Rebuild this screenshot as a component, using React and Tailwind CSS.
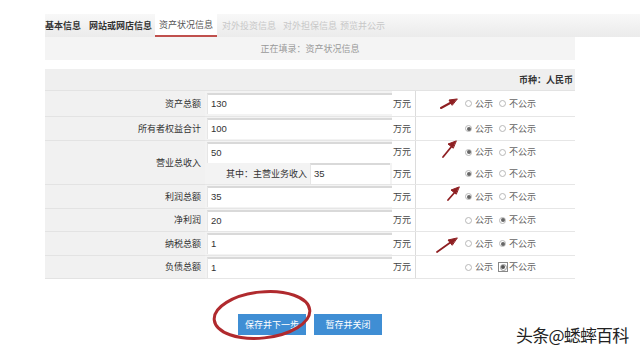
import React from "react";

const CJK = "font-['Noto_Sans_CJK_SC','Noto_Sans',sans-serif]";

function Radio({ on, focus }) {
  const dot = (
    <span className="inline-flex items-center justify-center w-[7px] h-[7px] rounded-full border border-[#b8b8b8] bg-white">
      {on && <span className="w-[4px] h-[4px] rounded-full bg-[#666]" />}
    </span>
  );
  if (focus) {
    return (
      <span className="inline-flex items-center justify-center w-[10px] h-[10px] border border-[#888] mr-[1px]">
        <span className="inline-flex items-center justify-center w-[7px] h-[7px] rounded-full border border-[#999] bg-white">
          <span className="w-[4px] h-[4px] rounded-full bg-[#555]" />
        </span>
      </span>
    );
  }
  return <span className="inline-flex mr-[3px]">{dot}</span>;
}

function Radios({ sel }) {
  return (
    <div className="flex items-center pl-[49px] text-[9px] text-[#666]">
      <span className="flex items-center">
        <Radio on={sel === 1} />
        公示
      </span>
      <span className={"flex items-center " + (sel === 3 ? "ml-[5px]" : "ml-[6px]")}>
        <Radio on={sel === 2} focus={sel === 3} />
        不公示
      </span>
    </div>
  );
}

function Input({ value, w }) {
  return (
    <div
      className={
        "h-[21px] bg-white border-t-2 border-t-[#d9d9d9] border-l border-l-[#e6e6e6] flex items-center pl-[3px] text-[9.5px] text-[#333] font-['Liberation_Sans',sans-serif] " +
        (w || "w-[185px]")
      }
    >
      {value}
    </div>
  );
}

function Sub({ h, children, sel, border = true }) {
  return (
    <div className={"flex " + h + (border ? " border-b border-[#e6e6e6]" : "")}>
      <div className="w-[187px] bg-[#f3f3f3] flex items-center pl-[2px]">{children}</div>
      <div className="w-[23px] flex items-center text-[9px] text-[#444] pl-[1px] bg-white">万元</div>
      <div className="w-[160px] border-l border-[#dcdcdc] flex items-center bg-white">
        <Radios sel={sel} />
      </div>
    </div>
  );
}

function Row({ label, value, h, sel }) {
  return (
    <div className="flex">
      <div className={"w-[160px] bg-[#f1f1f1] border-b border-[#e3e3e3] flex items-center justify-end pr-[4px] text-[9px] text-[#333] " + h}>
        {label}
      </div>
      <div className="flex-1">
        <Sub h={h} sel={sel}>
          <Input value={value} />
        </Sub>
      </div>
    </div>
  );
}

export default function App() {
  return (
    <div className={"relative w-[640px] h-[353px] bg-white overflow-hidden " + CJK}>
      {/* tabs */}
      <div className="ml-[45px] mt-[14px] w-[595px] h-[23px] flex items-stretch bg-gradient-to-b from-[#f8f8f8] to-[#ebebeb] text-[9px]">
        <div className="w-[44px] flex items-center text-[#333] font-bold">基本信息</div>
        <div className="w-[66px] flex items-center text-[#333] font-bold">网站或网店信息</div>
        <div className="w-[62px] flex items-center justify-center bg-white text-[#555] border-b-2 border-[#c0504d]">资产状况信息</div>
        <div className="w-[63px] flex items-center pl-[5px] text-[#c8c8c8]">对外投资信息</div>
        <div className="w-[60px] flex items-center pl-[3px] text-[#c8c8c8]">对外担保信息</div>
        <div className="flex items-center pl-[0px] text-[#c8c8c8]">预览并公示</div>
      </div>
      <div className="ml-[45px] w-[530px] h-[23px] bg-[#f4f4f4] flex items-center justify-center text-[9px] text-[#999]">
        正在填录：资产状况信息
      </div>

      {/* table */}
      <div className="ml-[45px] mt-[9px] w-[530px]">
        <div className="h-[22px] bg-[#efefef] border-b border-[#e3e3e3] flex items-center justify-end pr-[2px] text-[9px] font-bold text-[#333]">
          币种：人民币
        </div>
        <Row label="资产总额" value="130" h="h-[26px]" sel={0} />
        <Row label="所有者权益合计" value="100" h="h-[24px]" sel={1} />
        <div className="flex">
          <div className="w-[160px] h-[44px] bg-[#f1f1f1] border-b border-[#e3e3e3] flex items-center justify-end pr-[4px] text-[9px] text-[#333]">
            营业总收入
          </div>
          <div className="flex-1">
            <Sub h="h-[22px]" sel={1} border={false}>
              <Input value="50" />
            </Sub>
            <Sub h="h-[22px]" sel={1}>
              <div className="flex items-center w-full">
                <div className="w-[103px] text-right pr-[3px] text-[9px] text-[#333]">其中：主营业务收入</div>
                <Input value="35" w="w-[80px]" />
              </div>
            </Sub>
          </div>
        </div>
        <Row label="利润总额" value="35" h="h-[24px]" sel={1} />
        <Row label="净利润" value="20" h="h-[23px]" sel={2} />
        <Row label="纳税总额" value="1" h="h-[24px]" sel={2} />
        <Row label="负债总额" value="1" h="h-[23px]" sel={3} />
      </div>

      {/* buttons */}
      <div className="ml-[45px] w-[530px] mt-[35px] flex justify-center gap-[8px]">
        <button className="w-[68px] h-[21px] bg-[#3f8ed4] text-white text-[9px]">保存并下一步</button>
        <button className="w-[68px] h-[21px] bg-[#3f8ed4] text-white text-[9px]">暂存并关闭</button>
      </div>

      {/* annotations */}
      <svg className="absolute left-0 top-0 pointer-events-none" width="640" height="353" viewBox="0 0 640 353">
        <g stroke="#8e1f22" fill="#8e1f22" strokeLinecap="round">
          <line x1="441" y1="108" x2="452" y2="102" strokeWidth="2" />
          <polygon points="457,99 449,100 452,105" />
          <line x1="443" y1="157" x2="452" y2="146" strokeWidth="1.8" />
          <polygon points="456,141 448,144 453,148" />
          <line x1="448" y1="200" x2="455" y2="192" strokeWidth="1.8" />
          <polygon points="459,187 451,190 456,194" />
          <line x1="437" y1="252" x2="451" y2="242" strokeWidth="1.8" />
          <polygon points="457,238 448,240 452,245" />
        </g>
        <ellipse cx="262" cy="315" rx="48" ry="23" transform="rotate(-6 262 315)" fill="none" stroke="#b02a2e" strokeWidth="3" />
      </svg>

      <div className="absolute left-[516px] top-[322px] text-[17px] text-[#222] [text-shadow:0_0_2px_#fff,0_0_2px_#fff] tracking-[-0.8px]">
        头条@蟋蟀百科
      </div>
    </div>
  );
}
